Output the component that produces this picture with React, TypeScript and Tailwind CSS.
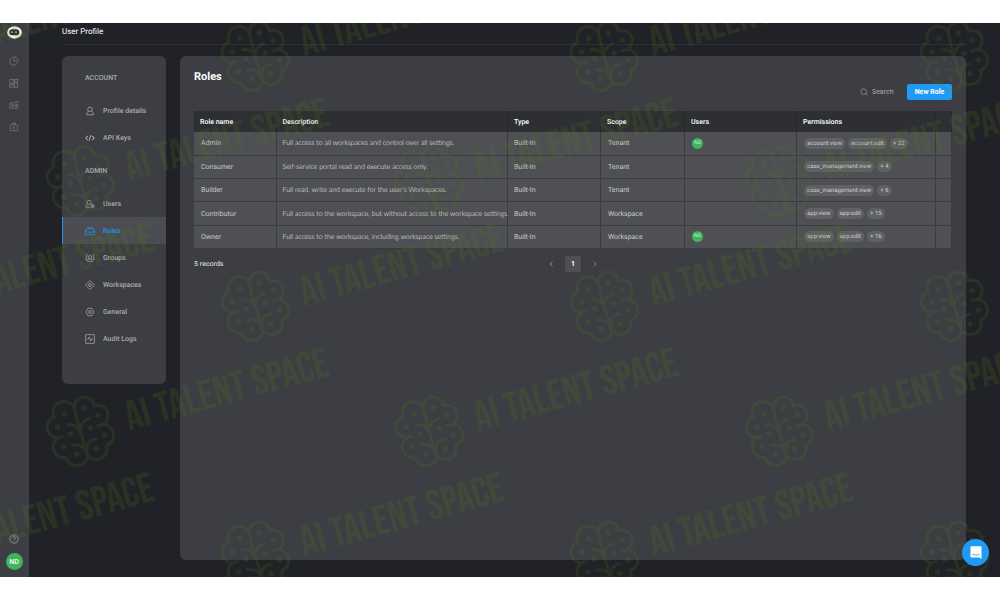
import type { ReactNode } from "react";
import clsx from "clsx";

interface Role {
  name: string;
  description: string;
  scope: string;
  users: string[];
  permissions: string[];
  more: number;
}

const roles: Role[] = [
  {
    name: "Admin",
    description: "Full access to all workspaces and control over all settings.",
    scope: "Tenant",
    users: ["ND"],
    permissions: ["account:view", "account:edit"],
    more: 22,
  },
  {
    name: "Consumer",
    description: "Self-service portal read and execute access only.",
    scope: "Tenant",
    users: [],
    permissions: ["case_management:view"],
    more: 4,
  },
  {
    name: "Builder",
    description: "Full read, write and execute for the user's Workspaces.",
    scope: "Tenant",
    users: [],
    permissions: ["case_management:view"],
    more: 6,
  },
  {
    name: "Contributor",
    description:
      "Full access to the workspace, but without access to the workspace settings",
    scope: "Workspace",
    users: [],
    permissions: ["app:view", "app:edit"],
    more: 15,
  },
  {
    name: "Owner",
    description: "Full access to the workspace, including workspace settings.",
    scope: "Workspace",
    users: ["ND"],
    permissions: ["app:view", "app:edit"],
    more: 16,
  },
];

const icons: Record<string, ReactNode> = {
  pie: (
    <>
      <path d="M9 3.500A9.500 9.500 0 1 0 20.500 15" />
      <path d="M12 2a10 10 0 0 1 10 10H12z" />
    </>
  ),
  dashboard: (
    <>
      <rect x="2" y="3" width="8" height="10" />
      <rect x="13" y="3" width="8" height="6" />
      <rect x="2" y="16" width="8" height="6" />
      <rect x="13" y="12" width="8" height="10" />
    </>
  ),
  report: (
    <>
      <path d="M2 7h12M2 7v13h19V4h-5v3" />
      <path d="M6 11v5M9 11h2v5H9zM15 10v6M18 10v6" />
    </>
  ),
  vault: (
    <>
      <rect x="3" y="7" width="18" height="14" rx="2" />
      <path d="M8 7V3h8v4M12 11v6M9 14h6" />
    </>
  ),
  help: (
    <>
      <circle cx="12" cy="12" r="10" />
      <path d="M8.500 9.500a3.500 3.500 0 1 1 4.500 3.300c-.7.300-1 .7-1 1.700M12 17v1.500" />
    </>
  ),
  profile: (
    <>
      <circle cx="12" cy="8" r="5.500" />
      <path d="M8.500 12.500C5 14 4 17 4 21h16c0-4-1-7-4.500-8.500" />
    </>
  ),
  code: <path d="M7 7l-5 5 5 5M17 7l5 5-5 5M14 5l-4 14" strokeWidth="2.500" />,
  users: (
    <>
      <circle cx="10" cy="8" r="5" />
      <path d="M7 12c-4 1.500-5 4-5 8h10" />
      <circle cx="18" cy="17" r="4" />
      <path d="M18 15v4M16 17h4" />
    </>
  ),
  roles: (
    <>
      <rect x="1" y="7" width="22" height="14" rx="1.500" />
      <path d="M7 7V3h10v4M1 13c5 3 17 3 22 0M12 13v3" />
    </>
  ),
  groups: (
    <>
      <circle cx="12" cy="10" r="4" />
      <path d="M5.500 20c0-4 2.500-6 6.500-6s6.500 2 6.500 6z" />
      <path d="M7 4.500a3 3 0 1 0-2 5.500c-2 1-3 3-3 6h3M17 4.500a3 3 0 1 1 2 5.500c2 1 3 3 3 6h-3" />
    </>
  ),
  workspaces: (
    <>
      <path d="M10.500 2.500 2.500 10.500a2 2 0 0 0 0 3l8 8a2 2 0 0 0 3 0l8-8a2 2 0 0 0 0-3l-8-8a2 2 0 0 0-3 0z" />
      <circle cx="12" cy="12" r="3.500" />
    </>
  ),
  general: (
    <>
      <path d="M7.500 3h9L22 12l-5.500 9h-9L2 12z" />
      <circle cx="12" cy="12" r="3.500" />
    </>
  ),
  audit: (
    <>
      <rect x="1.500" y="1.500" width="21" height="21" rx="1" />
      <path d="M5 12h3l2.500-5 3 10 2.500-5h3" />
    </>
  ),
  search: (
    <>
      <circle cx="11" cy="11" r="8.500" />
      <path d="M17 17l5 5" />
    </>
  ),
};

const Icon = ({ name, className }: { name: string; className: string }) => (
  <svg
    viewBox="0 0 24 24"
    fill="none"
    stroke="currentColor"
    strokeWidth="1.800"
    className={clsx("shrink-0", className)}
    aria-hidden="true"
  >
    {icons[name]}
  </svg>
);

const menu = [
  {
    title: "ACCOUNT",
    items: [
      { icon: "profile", label: "Profile details" },
      { icon: "code", label: "API Keys" },
    ],
  },
  {
    title: "ADMIN",
    items: [
      { icon: "users", label: "Users" },
      { icon: "roles", label: "Roles" },
      { icon: "groups", label: "Groups" },
      { icon: "workspaces", label: "Workspaces" },
      { icon: "general", label: "General" },
      { icon: "audit", label: "Audit Logs" },
    ],
  },
];

const Rail = () => (
  <nav className="w-[29px] shrink-0 bg-[#3d3e43] text-[#77787c] flex flex-col items-center pt-[3px] pb-[7px] pr-px">
    <a href="#home" aria-label="Home">
      <svg viewBox="0 0 45 39" className="w-[15px] h-[13px]" aria-hidden="true">
        <ellipse cx="22.500" cy="19.500" rx="22" ry="18.500" fill="#f4f8ec" />
        <rect x="7" y="10" width="30" height="18" rx="9" fill="#2b2c30" />
        <rect x="12" y="16" width="6" height="5" rx="2" fill="#aeb2a8" />
        <rect x="24" y="16" width="6" height="5" rx="2" fill="#aeb2a8" />
      </svg>
    </a>
    <div className="flex flex-col gap-3 mt-[17px]">
      {["pie", "dashboard", "report", "vault"].map((name) => (
        <a key={name} href={`#${name}`} aria-label={name}>
          <Icon name={name} className="size-[10px]" />
        </a>
      ))}
    </div>
    <a href="#help" aria-label="Help" className="mt-auto mb-[9px] text-[#a5a6a8]">
      <Icon name="help" className="size-[10px]" />
    </a>
    <button className="size-[17px] rounded-full bg-[#3fb45c] text-white text-[7px] font-medium">
      ND
    </button>
  </nav>
);

const SideMenu = () => (
  <aside className="w-[104px] shrink-0 h-[328px] rounded-md bg-[#3d3e43] text-[#a9aaad] pt-[15px]">
    {menu.map((group, i) => (
      <section key={group.title} className={clsx(i > 0 && "mt-[13px]")}>
        <h2 className="pl-[23px] mb-3 h-[14px] leading-[14px] font-medium">
          {group.title}
        </h2>
        {group.items.map(({ icon, label }) => (
          <a
            key={label}
            href={`#${icon}`}
            className={clsx(
              "h-[27px] flex items-center gap-2 pl-[22px] border-l font-medium",
              label === "Roles"
                ? "border-[#2196e3] bg-[#4c4d52] text-[#2196e3]"
                : "border-transparent"
            )}
          >
            <Icon name={icon} className="size-[10px]" />
            {label}
          </a>
        ))}
      </section>
    ))}
  </aside>
);

const Chip = ({ children }: { children: ReactNode }) => (
  <span className="h-[11px] leading-[11px] px-[3px] rounded-full bg-[#606164] text-[#cfd0d2] text-[6px]">
    {children}
  </span>
);

const RolesTable = () => (
  <table className="w-full h-[138px] table-fixed border-collapse text-left">
    <colgroup>
      <col className="w-[82px]" />
      <col />
      <col className="w-[93px]" />
      <col className="w-[84px]" />
      <col className="w-[112px]" />
      <col className="w-[139px]" />
      <col className="w-[16px]" />
    </colgroup>
    <thead className="bg-[#2e2f33] text-white">
      <tr className="h-[21px]">
        {["Role name", "Description", "Type", "Scope", "Users", "Permissions", ""].map(
          (title) => (
            <th
              key={title}
              className="pl-[6px] font-medium border-r border-[#29292d] last:pl-0"
            >
              {title}
            </th>
          )
        )}
      </tr>
    </thead>
    <tbody className="bg-[#4f5054] text-[#c8c9cb]">
      {roles.map((role) => (
        <tr key={role.name} className="h-[23px] border-b border-[#3a3b3f]">
          <td className="pl-[7px] border-r border-[#3a3b3f]">{role.name}</td>
          <td className="pl-[6px] border-r border-[#3a3b3f] whitespace-nowrap font-[Lato,sans-serif] font-light text-[#f4f4f5]">
            {role.description}
          </td>
          <td className="pl-[6px] border-r border-[#3a3b3f]">Built-In</td>
          <td className="pl-[7px] border-r border-[#3a3b3f]">{role.scope}</td>
          <td className="pl-[7px] border-r border-[#3a3b3f]">
            {role.users.map((user) => (
              <span
                key={user}
                className="block size-[11px] leading-[11px] rounded-full bg-[#3fb45c] text-[#d3efd9] text-[5px] text-center"
              >
                {user}
              </span>
            ))}
          </td>
          <td className="pl-[7px] border-r border-[#3a3b3f]">
            <div className="flex gap-[3px]">
              {role.permissions.map((permission) => (
                <Chip key={permission}>{permission}</Chip>
              ))}
              <Chip>+ {role.more}</Chip>
            </div>
          </td>
          <td className="border-r border-[#3a3b3f]" />
        </tr>
      ))}
    </tbody>
  </table>
);

// brain centres, relative to the top left corner of the app
const marks = [
  [-94, 33],
  [256, 33],
  [605, 33],
  [955, 33],
  [81, 158],
  [430, 158],
  [780, 158],
  [-94, 283],
  [256, 283],
  [605, 283],
  [955, 283],
  [81, 408],
  [430, 408],
  [780, 408],
  [-94, 533],
  [256, 533],
  [605, 533],
  [955, 533],
];

const dots = [
  [10, -69],
  [-49, -52],
  [51, -47],
  [-70, -12],
  [28, -8],
  [-31, 9],
  [70, 12],
  [-52, 48],
  [45, 53],
  [-13, 69],
];

const Watermark = () => (
  <svg
    className="absolute inset-0 size-full pointer-events-none opacity-18"
    aria-hidden="true"
  >
    {marks.map(([x, y]) => (
      <g key={`${x}-${y}`} transform={`translate(${x} ${y})`}>
        <g
          transform="scale(.333)"
          fill="none"
          stroke="#567a1b"
          strokeWidth="9"
          strokeLinecap="round"
          strokeLinejoin="round"
        >
          {/* outer lobes */}
          <path d="M-20-69A30 30 0 0 1 40-75A30 30 0 0 1 63-19A32 32 0 0 1 77 43A33 33 0 0 1 21 75A34 34 0 0 1-45 80A33 33 0 0 1-69 20A32 32 0 0 1-81-42A33 33 0 0 1-20-69" />
          {/* stem and branches */}
          <path d="M-20-69Q-12-32-4-4Q8 30 16 66L21 75" />
          <path d="M-41-19Q-14-22-3 2Q-2-28 24-37" />
          <path d="M-26 42Q8 38 18 64Q12 30 44 24" />
          <path d="M63-19Q57-19 51-15M-69 20Q-64 17-56 17" />
          {dots.map(([cx, cy]) => (
            <circle key={`${cx}${cy}`} cx={cx} cy={cy} r="8" fill="#567a1b" stroke="none" />
          ))}
        </g>
        <text
          x="48"
          y="0"
          transform="rotate(-15.500 48 0)"
          fill="#567a1b"
          className="font-['Bebas_Neue','Liberation_Sans_Narrow','Liberation_Sans',sans-serif] text-[42px]"
        >
          AI TALENT SPACE
        </text>
      </g>
    ))}
  </svg>
);

const App = () => {
  return (
    <div className="min-h-screen bg-white py-[23px] flex font-[Roboto,sans-serif] text-[7px] leading-[10px] [text-rendering:geometricPrecision]">
      <div className="relative flex-1 flex overflow-hidden bg-[#212227]">
        <Rail />

        <div className="flex-1 flex flex-col pl-[33px] pr-[34px] pb-[17px]">
          <header className="h-[22px] mb-[11px] pt-1 border-b border-[#2d2e33] text-white text-[8px] leading-[10px]">
            User Profile
          </header>

          <div className="flex-1 flex items-start gap-[14px]">
            <SideMenu />

            <main className="flex-1 self-stretch min-w-0 rounded-md bg-[#3d3e43] px-[14px] pt-[13px]">
              <h1 className="text-white text-[11px] leading-[15px] font-bold">Roles</h1>

              <div className="flex justify-end items-center gap-3 mb-[11px]">
                <label className="flex items-center gap-1 text-[#a9aaad]">
                  <Icon name="search" className="size-[8px]" />
                  <input
                    type="text"
                    placeholder="Search"
                    aria-label="Search"
                    className="w-[23px] bg-transparent outline-none placeholder:text-[#a9aaad]"
                  />
                </label>
                <button className="w-[45px] h-4 rounded-xs bg-[#1f9bf5] text-white font-bold">
                  New Role
                </button>
              </div>

              <RolesTable />

              {/* Pagination */}
              <footer className="grid grid-cols-[1fr_auto_1fr] items-center mt-[7px] text-[#d0d1d3]">
                <span className="font-medium">5 records</span>
                <div className="flex items-center gap-3">
                  <button aria-label="Previous page">
                    <svg viewBox="0 0 4 6" className="w-1 h-[6px]" fill="none" stroke="#a9aaad" strokeWidth=".7">
                      <path d="M3.500.5 1 3l2.500 2.500" />
                    </svg>
                  </button>
                  <button className="size-4 rounded-xs bg-[#4f5054] text-white font-bold">
                    1
                  </button>
                  <button aria-label="Next page">
                    <svg viewBox="0 0 4 6" className="w-1 h-[6px]" fill="none" stroke="#a9aaad" strokeWidth=".7">
                      <path d="M.5.5 3 3 .5 5.500" />
                    </svg>
                  </button>
                </div>
              </footer>
            </main>
          </div>
        </div>

        <Watermark />

        <button
          aria-label="Open chat"
          className="absolute right-[11px] bottom-[11px] size-[27px] rounded-full bg-[#1f9bf5] flex items-center justify-center"
        >
          <svg viewBox="0 0 36 40" className="w-3 h-[13px]" aria-hidden="true">
            <path d="M4 1h28q3 0 3 3v36l-7-5H4q-3 0-3-3V4q0-3 3-3z" fill="#fff" />
            <path d="M7 25q11 7 22 0" fill="none" stroke="#1f9bf5" strokeWidth="2.500" />
          </svg>
        </button>
      </div>
    </div>
  );
};

export default App;
